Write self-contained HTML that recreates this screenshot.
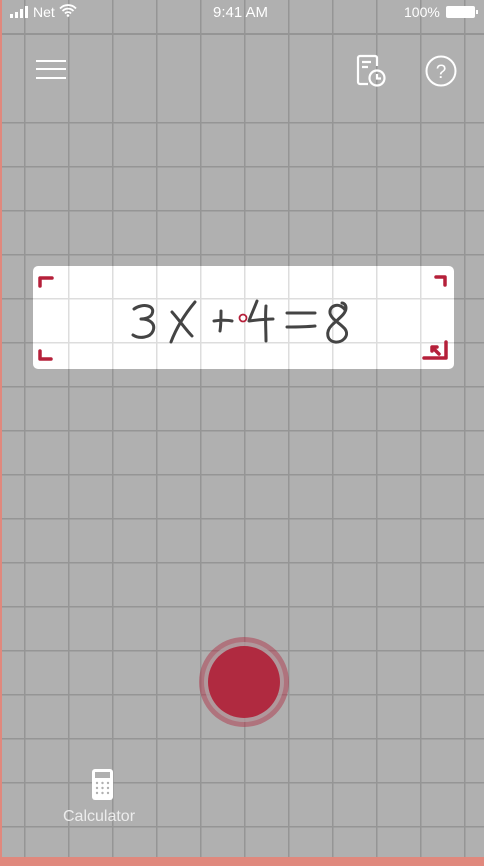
<!DOCTYPE html>
<html><head><meta charset="utf-8"><style>
html,body{margin:0;padding:0}
body{width:484px;height:866px;position:relative;overflow:hidden;background:#b0b0b0;font-family:"Liberation Sans",sans-serif}
.vg{position:absolute;inset:0;background-image:linear-gradient(to right,#959595 1.5px,transparent 1.5px);background-size:44px 44px;background-position:24px 0}
.hg{position:absolute;left:0;top:122px;width:484px;height:744px;background-image:linear-gradient(to bottom,#959595 1.5px,transparent 1.5px);background-size:44px 44px}
.h1{position:absolute;left:0;top:33px;width:484px;height:1.5px;background:#959595}
.lb{position:absolute;left:0;top:0;width:2px;height:866px;background:#e0887d}
.bb{position:absolute;left:0;top:857px;width:484px;height:9px;background:#e0887d}
.card{position:absolute;left:33px;top:266px;width:421px;height:103px;border-radius:5px;background:#fff;overflow:hidden}
.card .g{position:absolute;left:-33px;top:-266px;width:484px;height:640px;background-image:linear-gradient(to right,#ddd 1.5px,transparent 1.5px),linear-gradient(to bottom,#ddd 1.5px,transparent 1.5px);background-size:44px 44px;background-position:24px 34px}
.t{position:absolute;color:#fff}
</style></head><body>
<div class="vg"></div><div class="hg"></div><div class="h1"></div>
<div class="lb"></div>
<div class="t" style="left:9px;top:4px;font-size:14px">
<svg width="24" height="12" style="vertical-align:-1px"><rect x="1" y="8" width="3" height="4" fill="#fff"/><rect x="6" y="6" width="3" height="6" fill="#fff"/><rect x="11" y="3" width="3" height="9" fill="#fff"/><rect x="16" y="0" width="3" height="12" fill="#fff"/></svg>Net
<svg width="18" height="13" viewBox="0 0 18 13" style="vertical-align:0px"><path d="M1 4.5a11 11 0 0 1 16 0M3.5 7a7.5 7.5 0 0 1 11 0M6 9.5a4 4 0 0 1 6 0" stroke="#fff" stroke-width="1.8" fill="none"/><circle cx="9" cy="11.5" r="1.3" fill="#fff"/></svg></div>
<div class="t" style="left:213px;top:4px;font-size:15px">9:41 AM</div>
<div class="t" style="left:404px;top:4px;font-size:14px">100%</div>
<svg style="position:absolute;left:446px;top:6px" width="33" height="12"><rect x="0" y="0" width="29" height="12" rx="2" fill="#fff"/><rect x="30" y="4" width="2" height="4" fill="#fff"/></svg>
<svg style="position:absolute;left:35px;top:58px" width="32" height="24"><path d="M1 3h30M1 11h30M1 20h30" stroke="#fff" stroke-width="2"/></svg>
<svg style="position:absolute;left:354px;top:54px" width="36" height="34" viewBox="0 0 36 34"><path d="M14 30H6a2 2 0 0 1-2-2V4a2 2 0 0 1 2-2h15a2 2 0 0 1 2 2v8" stroke="#fff" stroke-width="2.2" fill="none"/><path d="M8 8h9M8 13h6" stroke="#fff" stroke-width="2.2"/><circle cx="23" cy="24" r="7.5" stroke="#fff" stroke-width="2.2" fill="none"/><path d="M23 20v4.5h4" stroke="#fff" stroke-width="2.2" fill="none"/></svg>
<svg style="position:absolute;left:424px;top:55px" width="34" height="34"><circle cx="17" cy="16" r="14.5" stroke="#fff" stroke-width="2" fill="none"/><text x="17" y="23" font-family="Liberation Sans" font-size="19" fill="#fff" text-anchor="middle">?</text></svg>
<div class="card"><div class="g"></div>
<svg style="position:absolute;left:0;top:0" width="421" height="103" viewBox="33 266 421 103">
<g stroke="#b5203a" stroke-width="3.5" fill="none" stroke-linecap="round" stroke-linejoin="round">
<path d="M40 286v-8h12"/><path d="M436 277h9v8"/><path d="M40 351v8h11"/><path d="M446 342v16h-22"/><path d="M433 348l6 6M432 347h5M432 347v4"/></g>
<g stroke="#444" stroke-width="3" fill="none" stroke-linecap="round" stroke-linejoin="round">
<path d="M134 309c8-6 22-4 18 5c-2 4-8 5-11 5c8 0 15 4 12 12c-3 7-14 8-20 4"/>
<path d="M172 312c8 9 14 18 20 24M195 302c-10 12-18 24-24 40"/>
<path d="M214 321c6-1 14-1 18 0M221 311c0 8 0 14-1 20"/>
<path d="M257 301c-3 8-6 14-8 20c8-1 16-2 24-2M266 306c-1 12 0 24 0 35"/>
<path d="M287 313h28M287 327c9 0 18 0 28-1"/>
<path d="M345 310c-5-8-16-5-15 3c1 6 10 10 15 16c5 7-3 14-10 13c-8-1-10-10-3-17c6-6 14-11 14-17c0-3-2-5-4-5"/>
</g>
<circle cx="243" cy="318" r="3.5" stroke="#b5203a" stroke-width="1.8" fill="#fff"/>
</svg></div>
<div style="position:absolute;left:199px;top:637px;width:90px;height:90px;border-radius:50%;background:rgba(176,42,64,0.45)"></div>
<div style="position:absolute;left:204px;top:642px;width:80px;height:80px;border-radius:50%;background:#b0b0b0;opacity:.6"></div>
<div style="position:absolute;left:208px;top:646px;width:72px;height:72px;border-radius:50%;background:#b02a40"></div>
<svg style="position:absolute;left:92px;top:769px" width="22" height="32"><rect x="0" y="0" width="21" height="31" rx="3" fill="#fff"/><rect x="3" y="3" width="15" height="6" fill="#b0b0b0"/><g fill="#b0b0b0"><circle cx="5" cy="14" r="1.2"/><circle cx="10.5" cy="14" r="1.2"/><circle cx="16" cy="14" r="1.2"/><circle cx="5" cy="19" r="1.2"/><circle cx="10.5" cy="19" r="1.2"/><circle cx="16" cy="19" r="1.2"/><circle cx="5" cy="24" r="1.2"/><circle cx="10.5" cy="24" r="1.2"/><circle cx="16" cy="24" r="1.2"/></g></svg>
<div class="t" style="left:63px;top:808px;font-size:16px;color:#ececec">Calculator</div>
<div class="bb"></div>
</body></html>
